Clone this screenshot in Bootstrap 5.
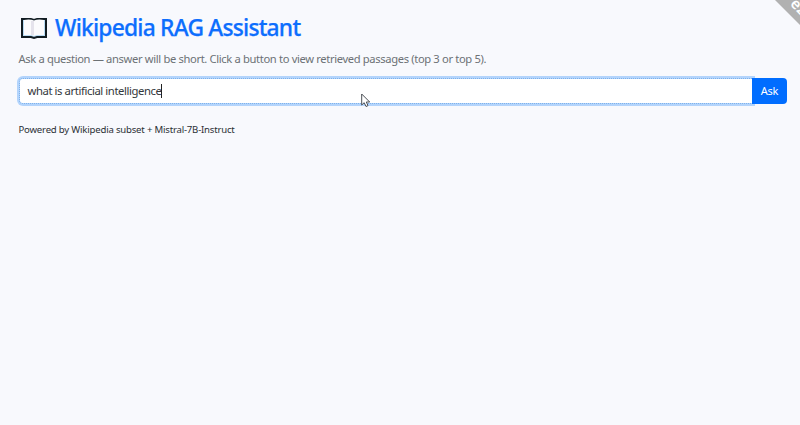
<!DOCTYPE html>
<html lang="en">
<head>
<meta charset="utf-8">
<meta name="viewport" content="width=device-width, initial-scale=1">
<title>Wikipedia RAG Assistant</title>
<link href="https://cdn.jsdelivr.net/npm/bootstrap@5.3.0/dist/css/bootstrap.min.css" rel="stylesheet">
<style>
html { font-size: 11.4px; }
body { background: #f8f9fd; font-family: "Noto Sans", "Open Sans", sans-serif; height: 425px; }
.page-wrap { padding: 14px 13px 0 18.5px; }
.app-title { color: #0d6efd; font-size: 22.8px; line-height: 26px; height: 27px; font-weight: 500; letter-spacing: -.79px; -webkit-text-stroke: .25px #0d6efd; }
.book { width: 28px; height: 24px; margin: 1px 7.5px 0 1px; }
.hint { color: #6c7175; font-size: 11.2px; line-height: 16px; margin-top: 10px; letter-spacing: -.355px; white-space: nowrap; }
.ask-row { margin-top: 11px; height: 26px; }
.ask-row .form-control { height: 26px; padding: 0 8px; font-size: 11.3px; color: #34383c; border: 1px dotted #7fb2ea; border-radius: 4px 0 0 4px; box-shadow: 0 0 0 2px #b3d4fc; display: flex; align-items: center; letter-spacing: -.42px; z-index: 0; }
.caret { width: 1px; height: 14px; background: #222; }
.ask-row .btn { width: 35px; padding: 0; font-size: 11px; letter-spacing: -.2px; background: #006dff; border: 0; border-radius: 0 4px 4px 0; }
.foot { margin-top: 19px; font-size: 9.6px; line-height: 14px; color: #2b3035; letter-spacing: -.2px; white-space: nowrap; }
.ribbon-corner { position: absolute; top: 0; right: 0; width: 40px; height: 40px; overflow: hidden; }
.ribbon { position: absolute; left: 5px; top: -34px; width: 110px; height: 24px; padding-left: 27.5px; background: #b1b1b1; color: #fff; transform: rotate(45deg); transform-origin: 0 100%; font-size: 15px; font-weight: 600; line-height: 23px; letter-spacing: .3px; }
.pointer { position: absolute; left: 361px; top: 93px; z-index: 10; }
</style>
</head>
<body class="position-relative">
<main class="page-wrap">
  <h1 class="app-title d-flex align-items-center mb-0">
    <svg class="book" viewBox="0 0 28 24"><path d="M2 3H11L14 4L17 3H26V21H17L14 22L11 21H2Z" fill="#b9dcf3" stroke="#111c22" stroke-width="2"/><path d="M4 4Q10 3 14 4.5Q18 3 24 4V19H17L14 20L11 19H4Z" fill="#fbfbfd"/><path d="M12.5 5V19" stroke="#e5e3ec" stroke-width="3"/></svg>
    <span>Wikipedia RAG Assistant</span>
  </h1>
  <p class="hint mb-0"><span>Ask a question — answer will be short. Click a button to view retrieved passages (top 3 or top 5).</span></p>
  <div class="input-group ask-row flex-nowrap">
    <div class="form-control" role="textbox"><span>what is artificial intelligence</span><span class="caret"></span></div>
    <button class="btn btn-primary" type="button">Ask</button>
  </div>
  <div class="foot"><span>Powered by Wikipedia subset + Mistral-7B-Instruct</span></div>
</main>
<div class="ribbon-corner"><div class="ribbon">ez</div></div>
<svg class="pointer" width="10" height="15" viewBox="0 0 10 15"><path d="M.7 1V12L3.2 9.7L5 13.5L7 12.6L5.3 9H8.7Z" fill="#fff" stroke="#4b4f55" stroke-width="1"/></svg>
<script src="https://cdn.jsdelivr.net/npm/bootstrap@5.3.0/dist/js/bootstrap.bundle.min.js"></script>
</body>
</html>
